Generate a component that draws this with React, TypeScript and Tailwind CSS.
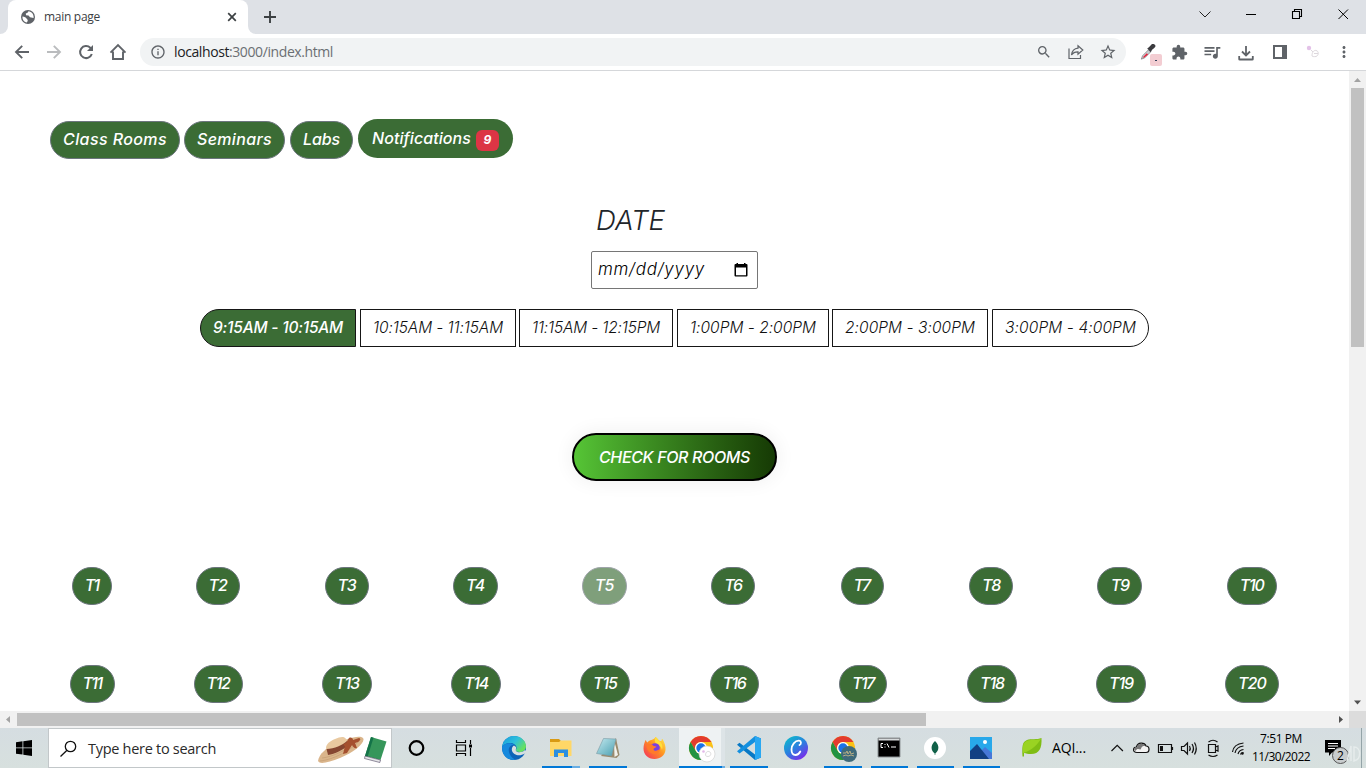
import React, { useLayoutEffect, useRef } from "react";
import {
  MdInfoOutline, MdSearch, MdStarBorder, MdExtension, MdQueueMusic, MdMoreVert,
} from "react-icons/md";

const POP = "font-['Inter',sans-serif] italic [font-feature-settings:'cv11'] whitespace-nowrap";
const UI = "font-['Open_Sans','Noto_Sans',sans-serif] whitespace-nowrap";

/* One line of text whose tracking is adjusted so that it spans `w` pixels. */
function Fit({ w, children, className = "" }: { w: number; children: string; className?: string }) {
  const ref = useRef<HTMLSpanElement>(null);
  useLayoutEffect(() => {
    const el = ref.current;
    if (!el) return;
    el.style.letterSpacing = "0px";
    const sp = (w - el.getBoundingClientRect().width) / children.length;
    el.style.letterSpacing = sp.toFixed(3) + "px";
  }, [w, children]);
  return <span ref={ref} className={"inline-block shrink-0 whitespace-nowrap " + className}>{children}</span>;
}

function TabStrip() {
  return (
    <div className="flex h-[34px] bg-[#dee1e6]">
      <div className="flex w-2 items-end bg-white">
        <div className="h-full w-2 rounded-br-lg bg-[#dee1e6]" />
      </div>
      <div className="w-[240px] bg-[#dee1e6]">
        <div className="flex h-full items-center rounded-t-lg bg-white pl-3">
          <svg className="size-4" viewBox="0 0 16 16">
            <circle cx="8" cy="8" r="7" fill="#5f6368" />
            <path d="M2.500 7.500c2 0 3.500 1 4 2s1.500 1 1.200 2.500L6.800 13.600C4 13 2.200 10.500 2.500 7.500zM8.500 2.300l-1 1.500-1.700.7.200 1.700 2.500.3 1.500 1.800 3.600.6C14 5.500 11.500 2.500 8.500 2.300z" fill="#fff" />
          </svg>
          <Fit w={56} className={UI + " ml-2 text-[12px] text-[#3c4043]"}>main page</Fit>
          <svg className="ml-[125px] size-[14px]" viewBox="0 0 14 14" stroke="#3c4043" strokeWidth="1.700"><path d="M3.200 3.200l7.600 7.600M10.800 3.200l-7.600 7.600" /></svg>
        </div>
      </div>
      <div className="w-2 bg-white"><div className="h-full rounded-bl-lg bg-[#dee1e6]" /></div>
      <svg className="mt-2 ml-[5px] size-[18px]" viewBox="0 0 18 18" stroke="#3c4043" strokeWidth="1.900"><path d="M9 3v12M3 9h12" /></svg>
      <svg className="ml-[917px] h-[34px] w-[160px]" viewBox="1196 0 160 34" fill="none" stroke="#222" strokeWidth="1">
        <path d="M1199.5 11.5l5.5 5.5 5.5-5.5" />
        <path d="M1246 14.5h10" stroke="#000" />
        <path d="M1292.5 11.5h7v7h-7zM1294.500 11.500v-2h7v7h-2" stroke="#000" strokeWidth="1.1" />
        <path d="M1338.500 9.500l9.500 9.500m0-9.500l-9.500 9.500" stroke="#000" />
      </svg>
    </div>
  );
}

function Toolbar() {
  return (
    <div className="flex h-[37px] items-center border-b border-[#d5d7da] bg-white pl-[13px] text-[#5f6368]">
      <svg className="size-[18px]" viewBox="0 0 18 18" fill="none" stroke="currentColor" strokeWidth="1.900"><path d="M16 9H3.500M9.200 2.800L3 9l6.200 6.200" /></svg>
      <svg className="ml-[14px] size-[18px] text-[#babcbe]" viewBox="0 0 18 18" fill="none" stroke="currentColor" strokeWidth="1.900"><path d="M2 9h12.500M8.800 2.800L15 9l-6.200 6.200" /></svg>
      <svg className="ml-[13px] size-5" viewBox="0 0 20 20" fill="none" stroke="currentColor" strokeWidth="2"><path d="M15.800 12A6 6 0 1 1 14.300 5.800L16 7.500" /><path d="M17 3v6h-6z" fill="currentColor" stroke="none" /></svg>
      <svg className="ml-[13px] size-[18px]" viewBox="0 0 18 18" fill="none" stroke="currentColor" strokeWidth="1.9">
        <path d="M1.500 9.700L9 2.200l7.500 7.500M4 8.500V16h10V8.500" />
      </svg>
      <div className="ml-[13px] flex h-7 w-[986px] shrink-0 items-center rounded-full bg-[#f1f3f4] pl-[10px]">
        <MdInfoOutline className="size-4" />
        <span className={UI + " ml-2 flex text-[14px] leading-5"}>
          <Fit w={55} className="text-[#202124]">localhost</Fit>
          <Fit w={104} className="text-[#6b6f73]">:3000/index.html</Fit>
        </span>
        <MdSearch className="ml-[703px] size-4" />
        <svg className="ml-[16px] h-4 w-4" viewBox="0 0 16 16" fill="none" stroke="currentColor" strokeWidth="1.200">
          <path d="M1 4.500v10h11.500V11M10 1.800l4.800 4.200L10 10.200V7.800C7 7.700 5 8.700 3.500 11 4 7 6.300 4.600 10 4.200z" />
        </svg>
        <MdStarBorder className="ml-[15px] size-[18px]" />
      </div>
      <div className="relative ml-[13px] size-[26px] shrink-0">
        <svg className="mt-[4px] ml-px size-[17px]" viewBox="0 0 20 20">
          <path d="M1.500 19l1.500-4 7-7 2.500 2.500-7 7z" fill="#c9ccd0" stroke="#777" strokeWidth=".8" />
          <path d="M3 17l5-5 1.500 1.500-4.500 3.500z" fill="#e8203a" />
          <path d="M8.500 6.500l2-1.500 3-3.300c1-1 4.500-.5 4.700 1.800 0 1.200-1 2-4 4.500l-1.500 3z" fill="#3b3b3f" />
        </svg>
        <div className="absolute top-[15px] left-[11px] flex h-3 w-3 items-center justify-center rounded-[2px] bg-[#f3cdd2]">
          <div className="h-px w-[2px] bg-[#35405c]" />
        </div>
      </div>
      <MdExtension className="ml-[6px] size-[17px] shrink-0" />
      <MdQueueMusic className="ml-[14px] size-5 shrink-0" />
      <svg className="mt-[2px] ml-[16px] size-4 shrink-0" viewBox="0 0 16 16" fill="none" stroke="currentColor" strokeWidth="1.800">
        <path d="M8 1v9M4 6.500l4 4 4-4M1.200 11v3.200q0 .3.600.3h12.400q.6 0 .6-.3V11" />
      </svg>
      <svg className="ml-[19px] size-[14px] shrink-0" viewBox="0 0 14 14">
        <path d="M0 0h14v14H0zM2 2v10h7V2z" fill="currentColor" fillRule="evenodd" />
      </svg>
      <svg className="ml-[18px] size-4 shrink-0" viewBox="0 0 16 16" fill="none">
        <circle cx="4" cy="4" r="2.200" fill="#e3c2e8" />
        <path d="M6 6l2 2M7 12c0-4 2-6 4-5.500 3 .5 3 5 0 6-2 .3-4 0-4-.5zM9 9.500h4" stroke="#ddd8dd" />
      </svg>
      <MdMoreVert className="ml-[14px] size-[18px] shrink-0" />
    </div>
  );
}

const green = "flex shrink-0 items-center justify-center bg-[#3b6c35] text-white ";

function Pill({ w, tw, label, cls = "" }: { w: number; tw: number; label: string; cls?: string }) {
  return (
    <button style={{ width: w }} className={green + POP + " h-[38px] rounded-[20px] border border-[#6c757d] pb-[2px] text-[16px] leading-none font-medium " + cls}>
      <Fit w={tw}>{label}</Fit>
    </button>
  );
}

const slots: [string, number, number, number, string][] = [
  ["9:15AM - 10:15AM", 156, 130, 4, "rounded-l-[20px] bg-[#3b6c35] text-white font-medium"],
  ["10:15AM - 11:15AM", 156, 130, 3, ""],
  ["11:15AM - 12:15PM", 154, 128, 4, ""],
  ["1:00PM - 2:00PM", 152, 126, 3, ""],
  ["2:00PM - 3:00PM", 156, 130, 4, ""],
  ["3:00PM - 4:00PM", 157, 131, 0, "rounded-r-[20px]"],
];

const rowOne: [string, number, number][] = [
  ["T1", 40, 14], ["T2", 44, 18], ["T3", 44, 18], ["T4", 45, 19], ["T5", 45, 19],
  ["T6", 44, 18], ["T7", 43, 17], ["T8", 44, 18], ["T9", 45, 18], ["T10", 50, 24],
];
const rowTwo: [string, number, number][] = [
  ["T11", 45, 19], ["T12", 49, 23], ["T13", 50, 24], ["T14", 50, 24], ["T15", 50, 24],
  ["T16", 49, 23], ["T17", 48, 22], ["T18", 50, 24], ["T19", 50, 24], ["T20", 54, 28],
];

function Rooms({ items, cols }: { items: [string, number, number][]; cols: string }) {
  return (
    <div className={"grid justify-items-center " + cols}>
      {items.map(([t, w, tw]) => (
        <Pill key={t} label={t} w={w} tw={tw} cls={t === "T5" ? "opacity-65" : ""} />
      ))}
    </div>
  );
}

function PageBody() {
  return (
    <main className="h-[640px] w-[1349px] shrink-0 overflow-hidden bg-white">
      <nav className="flex pt-[48px] pl-[50px]">
        <div className="mt-[2px] flex">
          <Pill label="Class Rooms" w={130} tw={104} />
          <div className="w-1" />
          <Pill label="Seminars" w={101} tw={75} />
          <div className="w-[5px]" />
          <Pill label="Labs" w={63} tw={37} />
        </div>
        <button className={green + POP + " ml-[5px] h-[39px] w-[155px] rounded-[20px] text-[16px] font-medium"}>
          <Fit w={99} className="pb-[2px]">Notifications</Fit>
          <span className="mt-[3px] ml-[5px] flex h-[21px] w-[23px] items-center justify-center rounded-md bg-[#dc3545] text-[12px] font-bold">9</span>
        </button>
      </nav>
      <section className="flex flex-col pl-[591px]">
        <h2 className={POP + " mt-[45px] ml-[5px] h-[34px] text-[27.500px] leading-[33px] font-light text-[#212529]"}>
          <Fit w={69}>DATE</Fit>
        </h2>
        <div className="mt-[13px] flex h-[38px] w-[167px] items-center justify-between rounded-[2px] border border-[#767676] pr-[9px] pl-[6px]">
          <span className={POP + " text-[17px] font-light text-black"}><Fit w={107}>mm/dd/yyyy</Fit></span>
          <svg className="size-[14px]" viewBox="0 0 14 14">
            <path d="M1.500 1h1V0h1.500v1h6V0h1.500v1h1q1 0 1 1v10.500q0 1-1 1h-11q-1 0-1-1V2q0-1 1-1zM2 4.500V12.200h10V4.500z" fill="#000" fillRule="evenodd" />
          </svg>
        </div>
      </section>
      <div className="mt-5 flex pl-[200px]">
        {slots.map(([t, w, tw, gap, cls]) => (
          <button key={t} style={{ width: w, marginRight: gap }} className={POP + " flex h-[38px] shrink-0 items-center justify-center border border-[#161616] pb-px text-[15.5px] " + (cls.includes("bg-") ? cls : cls + " font-light text-[#101010]")}>
            <Fit w={tw}>{t}</Fit>
          </button>
        ))}
      </div>
      <button className={POP + " mt-[86px] ml-[572px] flex h-12 w-[205px] items-center justify-center rounded-full border-2 border-black bg-linear-to-r from-[#56c536] to-[#163a05] pb-px text-[16px] font-medium text-white shadow-[0_0_20px_#eee]"}>
        <Fit w={151}>CHECK FOR ROOMS</Fit>
      </button>
      <div className="mt-[86px]"><Rooms items={rowOne} cols="grid-cols-[123px_repeat(8,128.9px)_134.8px] pl-[30.2px]" /></div>
      <div className="mt-[60px]"><Rooms items={rowTwo} cols="grid-cols-[123px_repeat(8,129px)_133px] pl-[30.5px]" /></div>
    </main>
  );
}

function Scrollbars() {
  return (
    <div className="flex h-[17px] bg-[#f1f1f1]">
      <svg className="h-[17px] w-[17px]" viewBox="0 0 17 17"><path d="M10 5v7L6 8.500z" fill="#a3a3a3" /></svg>
      <div className="mt-[2px] h-[13px] w-[909px] bg-[#c1c1c1]" />
      <svg className="ml-[406px] h-[17px] w-[17px]" viewBox="0 0 17 17"><path d="M7 5v7l4-3.500z" fill="#505050" /></svg>
      <div className="w-[17px] bg-[#dcdcdc]" />
    </div>
  );
}

function Chrome() {
  return (
    <g>
      <circle cx="12" cy="12" r="12" fill="#fbc116" />
      <path d="M1.600 6A12 12 0 0 1 22.400 6H12a6 6 0 0 0-5.200 9z" fill="#e33b2e" />
      <path d="M1.600 6A12 12 0 0 0 12 24l5.200-9A6 6 0 0 1 6.800 15z" fill="#229342" />
      <circle cx="12" cy="12" r="6" fill="#fff" />
      <circle cx="12" cy="12" r="4.700" fill="#1a73e8" />
    </g>
  );
}

const art: Record<string, React.ReactNode> = {
  cortana: <circle cx="11.500" cy="12" r="6.800" fill="none" stroke="#000" strokeWidth="2.200" />,
  tasks: (
    <g fill="none" stroke="#000" strokeWidth="1.200" transform="translate(-2 0)">
      <path d="M4.500 4v2.500h9V4M4.500 20v-2.500h9V20M4.500 9h9v6h-9zM18.500 4v4M18.500 12v8" />
      <path d="M17 8.500h3v3h-3z" fill="#000" stroke="none" />
    </g>
  ),
  edge: (
    <g>
      <defs>
        <linearGradient id="eg" x1="0" y1="0" x2="1" y2=".6"><stop offset="0" stopColor="#169bdc" /><stop offset=".55" stopColor="#2dbfdc" /><stop offset="1" stopColor="#68e25c" /></linearGradient>
      </defs>
      <circle cx="12" cy="12" r="12" fill="#0c63b8" />
      <path d="M0 11C1 4 6 0 12 0c7 0 12 5 12 10 0 4-3 6-6.500 6-3 0-4.500-1.200-3.500-2.500C16 10 12 7 8 7c-4 0-7 2-8 4z" fill="url(#eg)" />
      <path d="M0 11c2-4 9-5 12-2-4 0-6 3-5 7 1 4 4 7 7 7.800C5 25 0 19 0 11z" fill="#1689dd" />
      <path d="M12 9.500c-3 2-3 6 .5 8.500 3 2 7 1.500 10.500-.5l2 0V16l-2-2c-2 2-5 2.500-7.500 2-3-1-1-3-1.500-5z" fill="#d6dee0" />
    </g>
  ),
  folder: (
    <g>
      <path d="M1 3h9l2 2h10v4H1z" fill="#d99a13" />
      <path d="M1 6h9l2-1.500h10.500V20H1z" fill="#ffd767" />
      <path d="M5 13.500h14V21h-4v-4H9v4H5z" fill="#2c8fe0" />
    </g>
  ),
  notepad: (
    <g>
      <path d="M20 2l3.500 17-3 3L5 20z" fill="#9a8b6d" />
      <path d="M18 4l4 15-3.500 2z" fill="#f2f2ec" />
      <defs><linearGradient id="np" x1="0" y1="0" x2="1" y2="1"><stop offset="0" stopColor="#c4eaf0" /><stop offset="1" stopColor="#4a9fb0" /></linearGradient></defs>
      <path d="M7.500 2.500L20 3l-4.500 17L.5 17.500z" fill="url(#np)" stroke="#7899a3" strokeWidth=".6" />
    </g>
  ),
  firefox: (
    <g transform="translate(-.5 0)">
      <defs><linearGradient id="ff" x1="1" y1="0" x2="0" y2="1"><stop offset="0" stopColor="#fff04a" /><stop offset=".45" stopColor="#ff9420" /><stop offset="1" stopColor="#f42861" /></linearGradient></defs>
      <path d="M3 4c1 1 1 2 2 2.500C7 3 11 5 13 1c3 2 3 4 6 4 0-1 0-2 1-2 2 4 3.500 7 3 11-.7 5.500-5 9-11 9-6.500 0-11-4.500-11-10.500C1 9 2 7 3 4z" fill="url(#ff)" />
      <path d="M13 1c3 2 3 4 5 5 2 2 2.500 5 1.500 8-1-4-3-5-5-5-2-2-3-5-1.500-8z" fill="#ffdf3a" />
      <circle cx="12.500" cy="12" r="4.800" fill="#7a3fe0" />
      <path d="M4 9c3-2 6-1 7 1l3 .5c-1 1.500-3 1.500-3 3 1 2.500 5 1 6.500-1-.5 4-3 6-6 5.500C7 17.500 4 14 4 9z" fill="#ff7a2a" />
    </g>
  ),
  chrome: (
    <g>
      <Chrome />
      <circle cx="18" cy="18" r="8" fill="#fff" stroke="#ccc" strokeWidth=".6" />
      <path d="M16.500 19c0-3 2-4 3.500-3.500 3 1 2 5-1 5-1.500 0-2.500-.5-2.500-1.500z" fill="none" stroke="#ddd" />
      <circle cx="14.500" cy="15.500" r="1.300" fill="#e3b8e8" />
    </g>
  ),
  code: (
    <g>
      <path d="M18 0l6 2.500v19L18 24 0 8.700l2.500-2L18 18.500z" fill="#0879c5" />
      <path d="M18 0L0 15.300l2.500 2.200L18 6z" fill="#1490df" />
      <path d="M18 0l6 2.500v19L18 24z" fill="#29a8f2" />
    </g>
  ),
  canva: (
    <g>
      <defs><linearGradient id="cv" x1="0" y1="0" x2=".7" y2="1"><stop offset="0" stopColor="#08c4c8" /><stop offset=".55" stopColor="#2a80df" /><stop offset="1" stopColor="#7b2bea" /></linearGradient></defs>
      <circle cx="12" cy="12" r="12" fill="url(#cv)" />
      <path d="M15.500 9c2-1 2-4-.5-4.300C11 4.500 7.500 9 7.500 13.500 7.500 17 9 19 11.500 19c2.200 0 3.800-1.500 4.800-3.500" fill="none" stroke="#fff" strokeWidth="1.800" strokeLinecap="round" />
    </g>
  ),
  chrome2: (
    <g>
      <Chrome />
      <circle cx="18" cy="18" r="8" fill="#3e6a7a" />
      <path d="M12 17h3l1-2 1 3 2-3 1 3 3-1M12 20l3-1 2 1 3-1 3 1" fill="none" stroke="#b5ad84" strokeWidth="1" />
    </g>
  ),
  cmd: (
    <g>
      <path d="M1 2h22v19H1z" fill="#000" stroke="#8f9597" />
      <path d="M1.500 2.500h21v2h-21z" fill="#d8dbdc" />
      <path d="M6 7.500H4v4h2M8 8v1M8 10.500v1M10 7.500l2 4M14 11h5" fill="none" stroke="#fff" />
    </g>
  ),
  mongo: (
    <g>
      <circle cx="12" cy="12" r="11" fill="#fff" />
      <path d="M12 5c5 4.500 4 9.500.3 12.500V19h-.6v-1.500C8 14.500 7 9.500 12 5z" fill="#116149" />
    </g>
  ),
  photos: (
    <g>
      <path d="M1 1h22v22H1z" fill="#28a8ea" />
      <path d="M10 17l6-6 7 6v6H10z" fill="#4777d8" />
      <path d="M1 15l7-7 12 15H1z" fill="#123f83" />
      <circle cx="16" cy="6" r="2" fill="#fff" />
    </g>
  ),
};

/* name, cell width, underline left margin, underline width */
const apps: [string, number, number, number][] = [
  ["cortana", 49, 0, 0], ["tasks", 49, 0, 0], ["edge", 47, 0, 0], ["folder", 47, 5, 38],
  ["notepad", 47, 5, 38], ["firefox", 48, 0, 0], ["chrome", 46, 0, 46], ["code", 47, 5, 38],
  ["canva", 47, 0, 0], ["chrome2", 47, 5, 38], ["cmd", 46, 5, 37], ["mongo", 46, 5, 37], ["photos", 46, 5, 37],
];

function AppIcon({ item }: { item: [string, number, number, number] }) {
  const [name, w, l, u] = item;
  const active = name === "chrome";
  return (
    <div style={{ width: w }} className={"flex h-10 shrink-0 flex-col " + (active ? "bg-[#eef2f3]" : "")}>
      <div className={"flex h-[38px] items-center justify-center pt-[2px] " + (active ? "w-[46px] border-r-[4px] border-[#dde4e7]" : "")}>
        <svg className={"size-6 overflow-visible " + (active ? "ml-[2px]" : "")} viewBox="0 0 24 24">{art[name]}</svg>
      </div>
      {u > 0 && (
        <div style={{ width: u, marginLeft: l }} className="flex h-[2px] bg-[#0078d7]">
          {(active || name === "folder") && <div className={"ml-auto h-full bg-[#69aee3] " + (active ? "w-[3px]" : "w-[8px]")} />}
        </div>
      )}
    </div>
  );
}

function SearchArt() {
  return (
    <svg className="h-9 w-[72px]" viewBox="0 0 72 36">
      <path d="M1 31c1-7 8-13 17-17 9-4 24-10 28-6 3 4-8 14-23 20-11 4-20 7-22 3z" fill="#dab58b" />
      <path d="M3 31c12-1 31-10 41-22M5 28c10-1 26-8 36-18" fill="none" stroke="#c49d72" strokeWidth=".7" />
      <path d="M9 18c0-4 4-7 9-9 5-2 9-3 11 0l3 6c-6 5-14 9-21 10z" fill="#e9c9a0" />
      <path d="M9.500 19c8 0 16-4 20.500-8l2 4c-6 5-14 9-21 10z" fill="#854631" />
      <path d="M29 13l3-5c2-1 4 0 4 2l6-2c2 0 1 3-1 4l-3 1 2 5c-2 1-4-1-5-3l-5 8-4 1 2-8c-2 0-2-3 1-3z" fill="#a5502f" />
      <path d="M54 7l15.500 4.500L63.500 30 48 26z" fill="#36965a" />
      <path d="M54 7l2.500.7L50.500 27 48 26z" fill="#147349" />
      <path d="M48 26l15.500 4-.7 2.500L47.500 28.500z" fill="#e6e6e9" stroke="#4d4560" strokeWidth=".6" />
    </svg>
  );
}

function Taskbar() {
  return (
    <footer className={UI + " flex h-10 w-[1366px] bg-linear-to-b from-[#d5dde1] to-[#d7e0de] text-black"}>
      <div className="flex w-[48px] shrink-0 items-center justify-center">
        <svg className="size-4" viewBox="0 0 16 16"><path d="M0 2.200l6.500-.9v6.200H0zM7.300 1.200L16 0v7.500H7.300zM0 8.300h6.500v6.300L0 13.700zM7.300 8.300H16V16l-8.700-1.200z" /></svg>
      </div>
      <div className="flex w-[344px] shrink-0 items-center border border-[#c2c7c9] bg-white pl-[11px]">
        <svg className="size-[17px]" viewBox="0 0 17 17" fill="none" stroke="#111" strokeWidth="1.300"><circle cx="10.500" cy="6.500" r="5.200" /><path d="M7 10.200L.5 16.500" /></svg>
        <Fit w={128} className="ml-[11px] pt-px text-[14.500px] text-[#2a2a2a]">Type here to search</Fit>
        <div className="mr-[2px] ml-auto"><SearchArt /></div>
      </div>
      {apps.map((a) => <AppIcon key={a[0]} item={a} />)}
      <svg className="mt-[9px] ml-[17px] h-[20px] w-[21px] shrink-0" viewBox="0 0 21 20">
        <path d="M20.500 1c.5 10-2 16-10.500 16-3 0-5-.5-7-1v3.500H1.500C1 10 1 5 6 3c4-1.500 10 0 14.500-2z" fill="#7fbd14" />
        <path d="M2 16C7 15 15 10 20 2 15 4 5 1 2.500 7c-1 3-.5 6-.5 9z" fill="#9ad322" />
      </svg>
      <Fit w={34} className="mt-[10px] ml-[10px] text-[14px] leading-5">AQI...</Fit>
      <svg className="ml-[22px] h-10 w-[140px] shrink-0" viewBox="1108 728 140 40" fill="none" stroke="#111" strokeWidth="1.200">
        <path d="M1111.500 751l5.700-5.700 5.700 5.700" />
        <path d="M1137 752.500c-5 0-4-5.500-.5-5.500 1-5 8-5 9.500-1 4 0 4 6.500 0 6.500z" fill="#f3f3f3" />
        <path d="M1134 749c1-2 2-2 3-2 1-4 7-4 8.500-1-4-.5-4 2-5 3.500-2-1-4-1-5 1.500z" fill="#777" stroke="none" />
        <path d="M1158.500 744.500h13v8h-13zM1172.500 747v3" />
        <path d="M1160 746h3v5h-3z" fill="#111" stroke="none" />
        <path d="M1181.500 746.500h2.500l3.500-3.500v11l-3.500-3.500h-2.500zM1189.500 746q1.500 2.500 0 5M1192 744q3 4.500 0 9M1194.500 742.500q3.500 6 0 12" />
        <path d="M1208.500 744.500h7v8h-7zM1215.500 747l2.500-1v5l-2.500-1M1208.500 742q4.500-3.500 9 0M1208.500 755q4.500 3 9 0" />
        <path d="M1232.500 752q1-8 11-9M1235 753q1-6 8.500-7M1238 754q1-4 5.500-4.500M1240.500 754.500q.5-2 3-2" />
        <circle cx="1242.500" cy="753.500" r="1.200" fill="#111" stroke="none" />
      </svg>
      <div className="ml-[4px] flex w-[58px] shrink-0 flex-col items-center pt-[2px] text-[12px] leading-[18px]">
        <Fit w={42}>7:51 PM</Fit>
        <Fit w={58}>11/30/2022</Fit>
      </div>
      <div className="relative ml-[14px] h-10 w-[38px] shrink-0 border-r border-[#94a4a8]">
        <svg className="mt-[12px] ml-px h-[17px] w-4" viewBox="0 0 16 17"><path d="M0 0h16v12.500H7L4 16v-3.500H0z" /><path d="M3 3.500h10M3 6h10M3 8.500h7" stroke="#fff" /></svg>
        <div className="absolute top-[19px] left-[8px] flex size-[17px] items-center justify-center rounded-full border border-[#555] bg-[#c8cccd] text-[12px] leading-none">2</div>
        <svg className="absolute top-[17px] left-[22px] h-5 w-4" viewBox="0 0 16 20" fill="none" stroke="#e6ecec" strokeWidth="1.500"><path d="M1 16L5 1v15M8 2c7 0 8 12 0 14z" /></svg>
      </div>
    </footer>
  );
}

export default function App() {
  return (
    <div className="h-[768px] w-[1366px] overflow-hidden bg-white">
      <TabStrip />
      <Toolbar />
      <div className="flex h-[640px]">
        <PageBody />
        <div className="flex w-[17px] shrink-0 flex-col items-center bg-[#f1f1f1]">
          <svg className="h-[17px] w-[17px]" viewBox="0 0 17 17"><path d="M5 11h7L8.500 7z" fill="#a3a3a3" /></svg>
          <div className="h-[259px] w-[13px] bg-[#c1c1c1]" />
          <svg className="mt-auto h-[17px] w-[17px]" viewBox="0 0 17 17"><path d="M5 6.500h7L8.500 10.500z" fill="#505050" /></svg>
        </div>
      </div>
      <Scrollbars />
      <Taskbar />
    </div>
  );
}
